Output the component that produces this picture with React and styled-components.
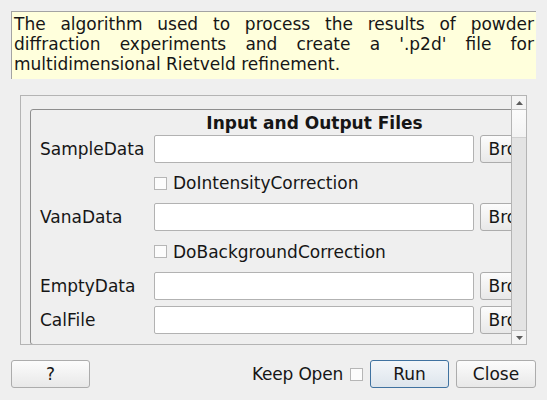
import React from "react";
import styled, { createGlobalStyle } from "styled-components";

const Global = createGlobalStyle`
  html, body { margin: 0; padding: 0; background: #efefef; }
  body {
    font-family: "DejaVu Sans", "Noto Sans", sans-serif;
    font-size: 17px;
    color: #161616;
  }
`;

const Dialog = styled.div`
  width: 547px;
  height: 400px;
  box-sizing: border-box;
  padding: 11px;
  display: flex;
  flex-direction: column;
`;

const Description = styled.div`
  height: 68px;
  box-sizing: border-box;
  background: #ffffdc;
  border-top: 1px solid #a3a3a3;
  border-left: 1px solid #a3a3a3;
  padding: 2px 2px 5px 2px;
  line-height: 20px;
  text-align: justify;
`;

const ScrollArea = styled.div`
  margin: 16px 9px 0 9px;
  height: 250px;
  box-sizing: border-box;
  border: 1px solid #b4b4b4;
  display: flex;
`;

const Viewport = styled.div`
  flex: 1;
  overflow: hidden;
  padding: 13px 0 0 9px;
`;

const ScrollBar = styled.div`
  width: 14px;
  flex-shrink: 0;
  border-left: 1px solid #b4b4b4;
  display: flex;
  flex-direction: column;
`;

const ArrowBox = styled.div`
  height: 13px;
  flex-shrink: 0;
  display: flex;
  align-items: center;
  justify-content: center;
  background: #f4f4f4;
  ${(p) => (p.$down ? "border-top: 1px solid #c2c2c2;" : "border-bottom: 1px solid #c2c2c2;")}
`;

const Track = styled.div`
  height: 27px;
  flex-shrink: 0;
  background: linear-gradient(#fbfbfb, #f3f3f3);
  border-bottom: 1px solid #d0d0d0;
`;

const Handle = styled.div`
  flex: 1;
  background: #e3e3e3;
`;

const GroupBox = styled.div`
  width: 569px;
  flex-shrink: 0;
  box-sizing: border-box;
  border: 1px solid #8e8e8e;
  border-radius: 3px;
  padding: 3px 0 10px 0;
`;

const GroupTitle = styled.div`
  text-align: center;
  font-weight: bold;
  line-height: 20px;
  margin-bottom: 2px;
`;

const FormGrid = styled.div`
  display: grid;
  padding-left: 9px;
  grid-template-columns: 108px 320px 79px;
  grid-template-rows: 28px 28px 28px 29px 28px 28px;
  column-gap: 6px;
  row-gap: 6px;
  align-items: center;
`;

const Label = styled.div`
  line-height: 28px;
  white-space: nowrap;
`;

const TextInput = styled.div`
  height: 28px;
  box-sizing: border-box;
  background: #ffffff;
  border: 1px solid #b2b2b2;
  border-radius: 2px;
`;

const Button = styled.div`
  width: ${(p) => p.$w || 79}px;
  height: 28px;
  box-sizing: border-box;
  border: 1px solid ${(p) => (p.$default ? "#3f72a0" : "#acacac")};
  border-radius: 3px;
  background: ${(p) =>
    p.$default
      ? "linear-gradient(#f3f6f9, #dde5ec)"
      : "linear-gradient(#fcfcfc, #e8e8e8)"};
  display: flex;
  align-items: center;
  justify-content: center;
  line-height: 20px;
  white-space: nowrap;
  overflow: hidden;
  flex-shrink: 0;
`;

const CheckRow = styled.div`
  grid-column: 2 / span 2;
  display: flex;
  align-items: center;
  gap: 6px;
  white-space: nowrap;
`;

const CheckBox = styled.div`
  width: 13px;
  height: 13px;
  box-sizing: border-box;
  border: 1px solid #b6b6b6;
  background: #fcfcfc;
  flex-shrink: 0;
`;

const BottomBar = styled.div`
  margin-top: 15px;
  height: 28px;
  display: flex;
  align-items: center;
`;

const Spacer = styled.div`
  flex: 1;
`;

const KeepLabel = styled.span`
  margin-right: 7px;
  white-space: nowrap;
  letter-spacing: -0.2px;
`;

const Gap = styled.div`
  width: ${(p) => p.$w}px;
  flex-shrink: 0;
`;

const Arrow = ({ down }) => (
  <svg width="7" height="4" viewBox="0 0 7 4">
    <polygon
      points={down ? "0,0 7,0 3.5,4" : "0,4 7,4 3.5,0"}
      fill="#5c5c5c"
    />
  </svg>
);

const rows = [
  { type: "file", label: "SampleData" },
  { type: "check", label: "DoIntensityCorrection" },
  { type: "file", label: "VanaData" },
  { type: "check", label: "DoBackgroundCorrection" },
  { type: "file", label: "EmptyData" },
  { type: "file", label: "CalFile" },
];

export default function App() {
  return (
    <>
      <Global />
      <Dialog>
        <Description>
          The algorithm used to process the results of powder diffraction
          experiments and create a '.p2d' file for multidimensional Rietveld
          refinement.
        </Description>
        <ScrollArea>
          <Viewport>
            <GroupBox>
              <GroupTitle>Input and Output Files</GroupTitle>
              <FormGrid>
                {rows.map((r) =>
                  r.type === "file" ? (
                    <React.Fragment key={r.label}>
                      <Label>{r.label}</Label>
                      <TextInput />
                      <Button>Browse</Button>
                    </React.Fragment>
                  ) : (
                    <React.Fragment key={r.label}>
                      <div />
                      <CheckRow>
                        <CheckBox />
                        <span>{r.label}</span>
                      </CheckRow>
                    </React.Fragment>
                  )
                )}
              </FormGrid>
            </GroupBox>
          </Viewport>
          <ScrollBar>
            <ArrowBox>
              <Arrow />
            </ArrowBox>
            <Track />
            <Handle />
            <ArrowBox $down>
              <Arrow down />
            </ArrowBox>
          </ScrollBar>
        </ScrollArea>
        <BottomBar>
          <Button>?</Button>
          <Spacer />
          <KeepLabel>Keep Open</KeepLabel>
          <CheckBox />
          <Gap $w={7} />
          <Button $default>Run</Button>
          <Gap $w={7} />
          <Button $w={80}>Close</Button>
        </BottomBar>
      </Dialog>
    </>
  );
}
